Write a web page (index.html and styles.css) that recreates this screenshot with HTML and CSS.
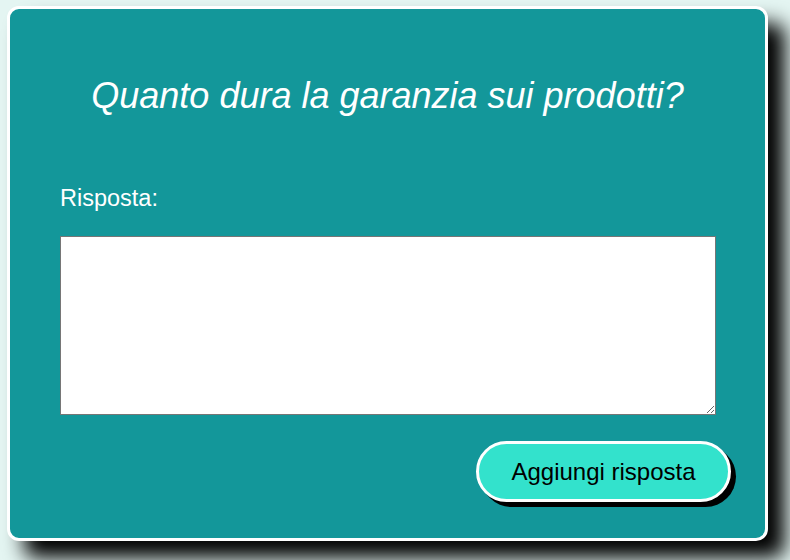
FILE: index.html
```html
<!DOCTYPE html>
<html lang="it">
<head>
<meta charset="utf-8">
<link rel="stylesheet" href="styles.css">
</head>
<body>
<div class="card">
  <h1 class="title">Quanto dura la garanzia sui prodotti?</h1>
  <label class="label" for="risposta">Risposta:</label>
  <textarea id="risposta" class="answer"></textarea>
  <div class="actions">
    <button class="btn">Aggiungi risposta</button>
  </div>
</div>
</body>
</html>
```

FILE: styles.css
```css
html, body {
  margin: 0;
  padding: 0;
}
body {
  width: 790px;
  height: 560px;
  overflow: hidden;
  background: #e4f5f2;
  font-family: "Liberation Sans", Arial, sans-serif;
}
.card {
  box-sizing: border-box;
  margin: 6px 0 0 7px;
  width: 761px;
  height: 535px;
  background: #13979a;
  border: 3px solid #ffffff;
  border-radius: 12px;
  box-shadow: 17px 17px 20px #000000;
  padding: 0 50px 0 50px;
  display: flex;
  flex-direction: column;
}
.title {
  margin: 66px 0 0 0;
  font-size: 36px;
  font-weight: normal;
  font-style: italic;
  color: #ffffff;
  text-align: center;
  line-height: 41px;
}
.label {
  margin-top: 69px;
  font-size: 23.5px;
  line-height: 27px;
  color: #ffffff;
}
.answer {
  box-sizing: border-box;
  margin-top: 24px;
  width: 656px;
  height: 179px;
  border: 1px solid #767676;
  background: #ffffff;
  resize: vertical;
  padding: 2px;
}
.actions {
  display: flex;
  justify-content: flex-end;
  margin-top: 26px;
  margin-right: -16px;
}
.btn {
  box-sizing: border-box;
  width: 255px;
  height: 61px;
  background: #33e2cc;
  border: 3px solid #ffffff;
  border-radius: 31px;
  box-shadow: 5px 5px 0 #000000;
  font-family: "Liberation Sans", Arial, sans-serif;
  font-size: 24px;
  color: #000000;
}
```
